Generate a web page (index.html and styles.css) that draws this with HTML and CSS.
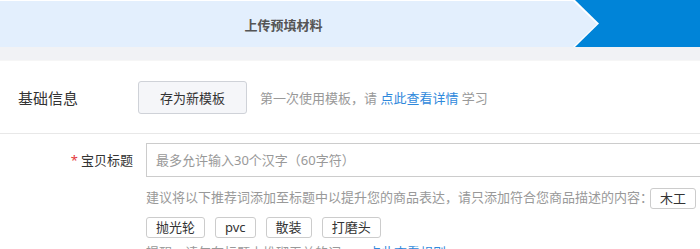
FILE: index.html
```html
<!DOCTYPE html>
<html lang="zh-CN">
<head>
  <meta charset="UTF-8">
  <meta name="viewport" content="width=device-width, initial-scale=1">
  <title>发布宝贝</title>
  <link rel="stylesheet" href="styles.css">
</head>
<body>

<div class="steps">
  <div class="step step-current">
    <div class="step-inner">上传预填材料</div>
  </div>
  <div class="step step-next"></div>
</div>
<div class="steps-gap"></div>

<div class="form">
  <div class="row row-head">
    <div class="section-title">基础信息</div>
    <button class="btn">存为新模板</button>
    <span class="tip">第一次使用模板，请 <a href="#">点此查看详情</a> 学习</span>
  </div>

  <div class="row row-field">
    <div class="field-label"><span class="required">*</span>宝贝标题</div>
    <div class="field-body">
      <input type="text" class="text-input" placeholder="最多允许输入30个汉字（60字符）">
      <div class="hint">建议将以下推荐词添加至标题中以提升您的商品表达，请只添加符合您商品描述的内容：<span class="tag tag-first">木工</span></div>
      <div class="tags"><span class="tag">抛光轮</span><span class="tag">pvc</span><span class="tag">散装</span><span class="tag">打磨头</span></div>
      <div class="notice">提醒：请勿在标题中堆砌无关的词，<a href="#">点此查看规则</a></div>
    </div>
  </div>
</div>

</body>
</html>
```

FILE: styles.css
```css
body {
  margin: 0;
  background-color: #ffffff;
  color: #333;
  font-family: "Noto Sans", "Noto Sans CJK SC", sans-serif;
  font-size: 13px;
  overflow: hidden;
}

a {
  color: #3089dc;
  text-decoration: none;
}

/* 步骤条 */
.steps {
  display: flex;
  height: 47px;
  background-color: #0084d8;
}

.step-current {
  width: 599px;
  background-color: #ffffff;
  clip-path: polygon(0 0, calc(100% - 24px) 0, 100% 50%, calc(100% - 24px) 100%, 0 100%);
}

.step-inner {
  width: 597px;
  height: 46px;
  margin-top: 1px;
  padding-right: 24px;
  box-sizing: border-box;
  background-color: #e3effd;
  clip-path: polygon(0 0, calc(100% - 24px) 0, 100% 50%, calc(100% - 24px) 100%, 0 100%);
  display: flex;
  align-items: center;
  justify-content: center;
  font-weight: bold;
  color: #555;
  font-size: 13px;
  text-indent: -6px;
}

.steps-gap {
  height: 13px;
  background-color: #f1f2f5;
  border-bottom: 1px solid #f6f6f6;
}

/* 表单 */
.row-head {
  display: flex;
  align-items: center;
  height: 72px;
  border-bottom: 1px solid #e8e8e8;
  padding-left: 18px;
}

.section-title {
  width: 120px;
  font-size: 15px;
  color: #333;
}

.btn {
  width: 109px;
  height: 33px;
  margin-right: 13px;
  background-color: #f5f6f9;
  border: 1px solid #cfd2d8;
  border-radius: 3px;
  color: #333;
  font-family: inherit;
  font-size: 13px;
  padding: 0;
}

.tip {
  color: #999;
}

.row-field {
  display: flex;
  padding-top: 9px;
}

.field-label {
  width: 133px;
  height: 34px;
  line-height: 34px;
  text-align: right;
  color: #333;
  flex-shrink: 0;
}

.required {
  color: #e4393c;
  margin-right: 3px;
}

.field-body {
  margin-left: 13px;
  width: 600px;
  flex-shrink: 0;
}

.text-input {
  display: block;
  width: 100%;
  height: 34px;
  box-sizing: border-box;
  border: 1px solid #cccccc;
  padding: 0 9px;
  font-family: inherit;
  font-size: 13px;
  color: #333;
  outline: none;
}

.text-input::placeholder {
  color: #999;
}

.hint {
  margin-top: 5px;
  line-height: 30px;
  color: #999;
  white-space: nowrap;
}

.tags {
  line-height: 30px;
  margin-top: -1px;
}

.tag {
  display: inline-block;
  height: 21px;
  line-height: 19px;
  box-sizing: border-box;
  padding: 0 9px;
  border: 1px solid #cccccc;
  border-radius: 3px;
  color: #333;
  vertical-align: middle;
  margin-right: 10px;
  background-color: #fff;
}

.tag-first {
  margin-left: -3px;
}

.notice {
  line-height: 30px;
  margin-top: -4px;
  color: #999;
}

.notice a {
  margin-left: 14px;
}
```
